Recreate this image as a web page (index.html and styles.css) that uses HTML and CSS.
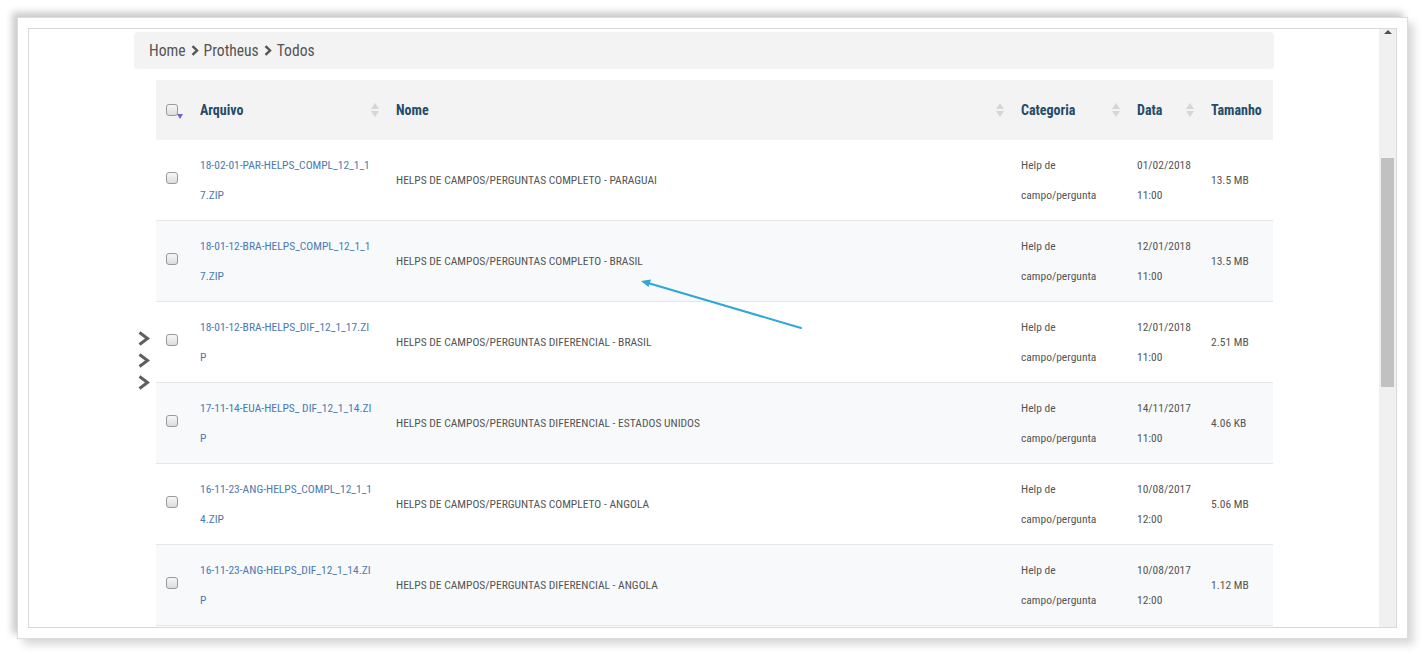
FILE: index.html
```html
<!DOCTYPE html>
<html lang="pt-BR">
<head>
<meta charset="utf-8">
<title>Protheus - Todos</title>
<link rel="stylesheet" href="styles.css">
</head>
<body>
<div class="frame">
  <div class="window">
    <div class="page">
      <nav class="crumbs">
        <span class="crumb">Home</span>
        <svg class="crumb-sep" width="8" height="11" viewBox="0 0 8 11"><polyline points="1.5,1.2 6,5.5 1.5,9.8" fill="none" stroke="#555" stroke-width="2.4"/></svg>
        <span class="crumb">Protheus</span>
        <svg class="crumb-sep" width="8" height="11" viewBox="0 0 8 11"><polyline points="1.5,1.2 6,5.5 1.5,9.8" fill="none" stroke="#555" stroke-width="2.4"/></svg>
        <span class="crumb">Todos</span>
      </nav>
      <div class="content">
        <div class="side-toggle">
          <svg class="chev" width="14" height="15" viewBox="0 0 14 15"><polyline points="2.5,1.5 10.5,7.5 2.5,13.5" fill="none" stroke="#5f5f5f" stroke-width="3"/></svg>
          <svg class="chev" width="14" height="15" viewBox="0 0 14 15"><polyline points="2.5,1.5 10.5,7.5 2.5,13.5" fill="none" stroke="#5f5f5f" stroke-width="3"/></svg>
          <svg class="chev" width="14" height="15" viewBox="0 0 14 15"><polyline points="2.5,1.5 10.5,7.5 2.5,13.5" fill="none" stroke="#5f5f5f" stroke-width="3"/></svg>
        </div>
        <table class="files">
          <colgroup>
            <col class="c-check"><col class="c-file"><col class="c-name"><col class="c-cat"><col class="c-date"><col class="c-size">
          </colgroup>
          <thead>
            <tr>
              <th><span class="chk chk-menu"></span></th>
              <th><div class="th-in">Arquivo<span class="sort"></span></div></th>
              <th><div class="th-in">Nome<span class="sort"></span></div></th>
              <th><div class="th-in">Categoria<span class="sort"></span></div></th>
              <th><div class="th-in">Data<span class="sort"></span></div></th>
              <th><div class="th-in">Tamanho</div></th>
            </tr>
          </thead>
          <tbody>
            <tr>
              <td><span class="chk"></span></td>
              <td><a class="file" href="#">18-02-01-PAR-HELPS_COMPL_12_1_17.ZIP</a></td>
              <td class="name">HELPS DE CAMPOS/PERGUNTAS COMPLETO - PARAGUAI</td>
              <td class="two">Help de<br>campo/pergunta</td>
              <td class="two">01/02/2018<br>11:00</td>
              <td class="size">13.5 MB</td>
            </tr>
            <tr>
              <td><span class="chk"></span></td>
              <td><a class="file" href="#">18-01-12-BRA-HELPS_COMPL_12_1_17.ZIP</a></td>
              <td class="name">HELPS DE CAMPOS/PERGUNTAS COMPLETO - BRASIL</td>
              <td class="two">Help de<br>campo/pergunta</td>
              <td class="two">12/01/2018<br>11:00</td>
              <td class="size">13.5 MB</td>
            </tr>
            <tr>
              <td><span class="chk"></span></td>
              <td><a class="file" href="#">18-01-12-BRA-HELPS_DIF_12_1_17.ZIP</a></td>
              <td class="name">HELPS DE CAMPOS/PERGUNTAS DIFERENCIAL - BRASIL</td>
              <td class="two">Help de<br>campo/pergunta</td>
              <td class="two">12/01/2018<br>11:00</td>
              <td class="size">2.51 MB</td>
            </tr>
            <tr>
              <td><span class="chk"></span></td>
              <td><a class="file" href="#">17-11-14-EUA-HELPS_ DIF_12_1_14.ZIP</a></td>
              <td class="name">HELPS DE CAMPOS/PERGUNTAS DIFERENCIAL - ESTADOS UNIDOS</td>
              <td class="two">Help de<br>campo/pergunta</td>
              <td class="two">14/11/2017<br>11:00</td>
              <td class="size">4.06 KB</td>
            </tr>
            <tr>
              <td><span class="chk"></span></td>
              <td><a class="file" href="#">16-11-23-ANG-HELPS_COMPL_12_1_14.ZIP</a></td>
              <td class="name">HELPS DE CAMPOS/PERGUNTAS COMPLETO - ANGOLA</td>
              <td class="two">Help de<br>campo/pergunta</td>
              <td class="two">10/08/2017<br>12:00</td>
              <td class="size">5.06 MB</td>
            </tr>
            <tr>
              <td><span class="chk"></span></td>
              <td><a class="file" href="#">16-11-23-ANG-HELPS_DIF_12_1_14.ZIP</a></td>
              <td class="name">HELPS DE CAMPOS/PERGUNTAS DIFERENCIAL - ANGOLA</td>
              <td class="two">Help de<br>campo/pergunta</td>
              <td class="two">10/08/2017<br>12:00</td>
              <td class="size">1.12 MB</td>
            </tr>
          </tbody>
        </table>
      </div>
    </div>
    <div class="scrollbar">
      <span class="sb-up"></span>
      <span class="sb-thumb"></span>
    </div>
  </div>
</div>
<svg class="annotation" width="1422" height="654" viewBox="0 0 1422 654">
  <line x1="801" y1="328" x2="648" y2="283" stroke="#2ea8d9" stroke-width="2" stroke-linecap="round"/>
  <polygon points="641,281 651,279.5 648.5,287" fill="#2ea8d9"/>
</svg>
</body>
</html>
```

FILE: styles.css
```css
html, body {
  margin: 0;
  padding: 0;
  background: #ffffff;
}

body {
  width: 1422px;
  height: 654px;
  position: relative;
  overflow: hidden;
}

.frame {
  box-sizing: border-box;
  margin: 17px 0 0 17px;
  width: 1391px;
  height: 622px;
  border: 1px solid #dcdcdc;
  padding: 10px;
  background: #ffffff;
  box-shadow: -5px -5px 7px rgba(0, 0, 0, 0.2), 6px 6px 8px rgba(0, 0, 0, 0.15);
}

.window {
  box-sizing: border-box;
  height: 100%;
  border: 1px solid #d9d9d9;
  display: flex;
  overflow: hidden;
}

.page {
  flex: 1;
  padding: 3px 0 0 105px;
  overflow: hidden;
  font-family: "Roboto Condensed", "Liberation Sans Narrow", "Arial Narrow", Roboto, sans-serif;
  font-stretch: condensed;
  color: #555555;
}

/* breadcrumb */
.crumbs {
  box-sizing: border-box;
  width: 1140px;
  height: 37px;
  background: #f3f3f3;
  border-radius: 4px;
  display: flex;
  align-items: center;
  gap: 4px;
  padding-left: 15px;
  font-size: 15.6px;
  color: #555555;
}

.crumb-sep {
  display: block;
  margin: 0 1px;
}

/* content row */
.content {
  display: flex;
  margin-top: 11px;
}

.side-toggle {
  width: 22px;
  display: flex;
  flex-direction: column;
  align-items: flex-start;
  padding-left: 3px;
  padding-top: 251px;
  gap: 7px;
  box-sizing: border-box;
}

.chev {
  display: block;
}

/* table */
.files {
  width: 1117px;
  border-collapse: collapse;
  table-layout: fixed;
}

.c-check { width: 34px; }
.c-file { width: 196px; }
.c-name { width: 625px; }
.c-cat { width: 116px; }
.c-date { width: 74px; }
.c-size { width: 72px; }

.files thead th {
  height: 60px;
  padding: 0 7px 0 10px;
  background: #f3f3f3;
  text-align: left;
  vertical-align: middle;
  font-size: 14px;
  font-weight: 700;
  color: #244b69;
}

.th-in {
  display: flex;
  align-items: center;
  justify-content: space-between;
}

.sort {
  width: 8px;
  height: 14px;
  position: relative;
  flex: none;
}

.sort::before,
.sort::after {
  content: "";
  position: absolute;
  left: 0;
  border-left: 4px solid transparent;
  border-right: 4px solid transparent;
}

.sort::before {
  top: 0;
  border-bottom: 6px solid #d6d6d6;
}

.sort::after {
  bottom: 0;
  border-top: 6px solid #d6d6d6;
}

.files tbody td {
  height: 80px;
  padding: 0 10px;
  border-bottom: 1px solid #e6e6e6;
  vertical-align: middle;
  font-size: 11.5px;
  color: #555555;
}

.files tbody tr:nth-child(even) td {
  background: #f8f9fb;
}

.file {
  display: block;
  max-width: 173px;
  line-height: 30px;
  color: #4c79b3;
  text-decoration: none;
  word-break: break-all;
}

.two {
  line-height: 30px;
}

.size {
  white-space: nowrap;
}

/* checkbox */
.chk {
  display: block;
  box-sizing: border-box;
  width: 12px;
  height: 12px;
  border: 1px solid #9a9a9a;
  border-radius: 3px;
  background: linear-gradient(#f7f7f7, #dcdcdc);
  margin-top: -4px;
  position: relative;
}

.chk-menu {
  margin-top: -1px;
}

.chk-menu::after {
  content: "";
  position: absolute;
  left: 10px;
  top: 9px;
  border-left: 3px solid transparent;
  border-right: 3px solid transparent;
  border-top: 5px solid #6f64cc;
}

/* scrollbar */
.scrollbar {
  width: 17px;
  flex: none;
  background: #f0f0f0;
  position: relative;
}

.sb-up {
  display: block;
  width: 0;
  height: 0;
  margin: 1px auto 0;
  border-left: 4px solid transparent;
  border-right: 4px solid transparent;
  border-bottom: 4px solid #505050;
}

.sb-thumb {
  display: block;
  width: 13px;
  height: 229px;
  margin: 124px 0 0 2px;
  background: #c1c1c1;
}

/* annotation overlay */
.annotation {
  position: absolute;
  left: 0;
  top: 0;
  pointer-events: none;
}
```
